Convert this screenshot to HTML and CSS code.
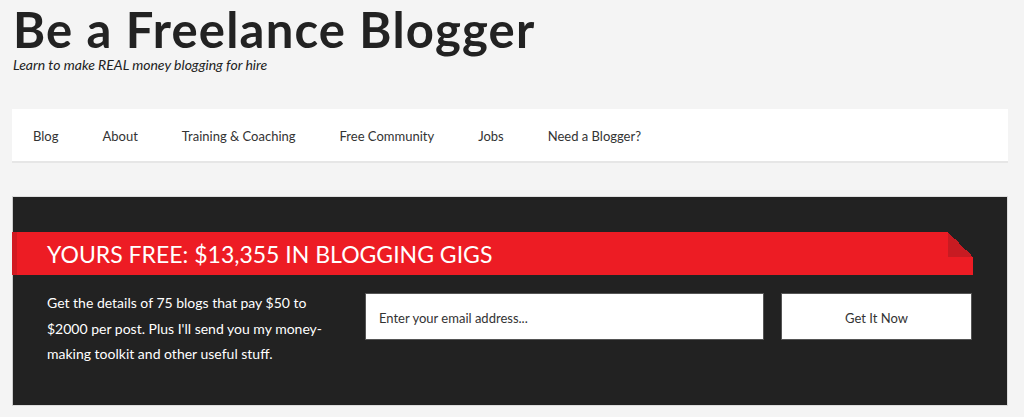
FILE: index.html
```html
<!DOCTYPE html>
<html>
<head>
<meta charset="utf-8">
<link rel="stylesheet" href="styles.css">
</head>
<body>
<header class="site-header">
  <h1 class="site-title">Be a Freelance Blogger</h1>
  <p class="site-tagline">Learn to make REAL money blogging for hire</p>
</header>
<nav class="main-nav">
  <a href="#">Blog</a>
  <a href="#">About</a>
  <a href="#">Training &amp; Coaching</a>
  <a href="#">Free Community</a>
  <a href="#">Jobs</a>
  <a href="#">Need a Blogger?</a>
</nav>
<section class="optin">
  <div class="banner">
    <div class="banner-main">YOURS FREE: $13,355 IN BLOGGING GIGS</div>
    <div class="banner-fold">
      <div class="fold-corner"></div>
      <div class="fold-tail"></div>
    </div>
  </div>
  <div class="optin-body">
    <p class="optin-text">Get the details of 75 blogs that pay $50 to $2000 per post. Plus I'll send you my money-making toolkit and other useful stuff.</p>
    <div class="optin-input">Enter your email address...</div>
    <div class="optin-button">Get It Now</div>
  </div>
</section>
</body>
</html>
```
FILE: styles.css
```css
* { box-sizing: border-box; }
body {
  margin: 0;
  padding: 0 16px 0 12px;
  background: #f4f4f4;
  font-family: "Lato", "Open Sans", sans-serif;
  color: #222;
}
.site-header {
  padding: 4px 0 0 1px;
  height: 109px;
}
.site-title {
  margin: 0;
  font-family: "Lato", sans-serif;
  font-weight: 700;
  font-size: 49px;
  line-height: 50px;
  color: #222;
  letter-spacing: 1.2px;
}
.site-tagline {
  margin: 3px 0 0;
  font-style: italic;
  font-size: 14px;
  line-height: 16px;
  color: #222;
}
.main-nav {
  display: flex;
  align-items: center;
  height: 54px;
  padding-top: 2px;
  background: #fff;
  border-bottom: 2px solid #e6e6e6;
  padding-left: 21px;
}
.main-nav a {
  color: #333;
  text-decoration: none;
  font-size: 13px;
  margin-right: 44px;
}
.optin {
  margin-top: 33px;
  background: #222;
  border: 1px solid #ddd;
  border-left-color: #ccc;
  height: 210px;
  padding-top: 35px;
}
.banner {
  display: flex;
  height: 43px;
  margin-right: 34px;
  margin-left: -1px;
}
.banner-main {
  flex: 1;
  background: #ed1c24;
  border-left: 5px solid #d21a22;
  color: #fff;
  font-size: 23px;
  line-height: 44px;
  padding-left: 30px;
  font-weight: 400;
}
.banner-fold {
  width: 25px;
  display: flex;
  flex-direction: column;
}
.fold-corner {
  height: 25px;
  background: linear-gradient(to top right, #c81b22 50%, #222 50%);
}
.fold-tail {
  flex: 1;
  background: #ed1c24;
}
.optin-body {
  display: flex;
  align-items: flex-start;
  padding: 18px 0 0 34px;
}
.optin-text {
  margin: 0;
  width: 300px;
  padding-right: 10px;
  color: #fff;
  font-size: 14px;
  line-height: 25.5px;
  margin-top: -3px;
}
.optin-input {
  margin-left: 18px;
  width: 399px;
  height: 47px;
  background: #fff;
  border: 1px solid #555;
  font-size: 13px;
  line-height: 48px;
  padding-left: 13px;
  color: #333;
}
.optin-button {
  margin-left: 17px;
  width: 191px;
  height: 47px;
  background: #fff;
  border: 1px solid #555;
  font-size: 13px;
  line-height: 48px;
  text-align: center;
  color: #333;
}
```
